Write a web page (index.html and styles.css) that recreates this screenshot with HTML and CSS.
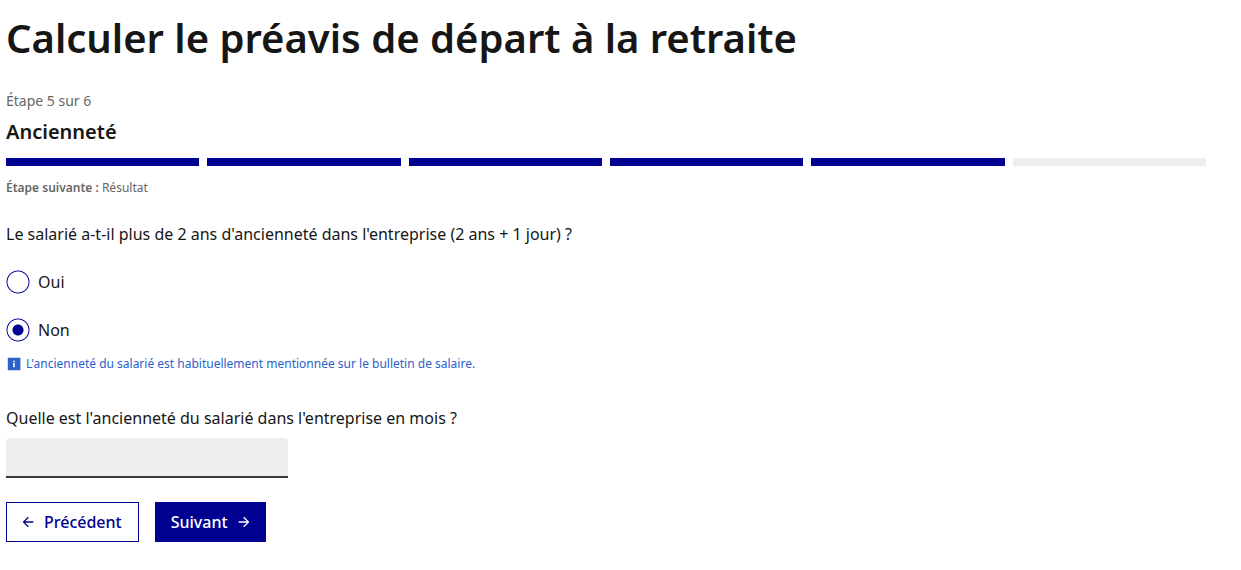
FILE: index.html
```html
<!DOCTYPE html>
<html lang="fr">
<head>
<meta charset="utf-8">
<meta name="viewport" content="width=device-width, initial-scale=1">
<title>Calculer le préavis de départ à la retraite</title>
<link rel="stylesheet" href="styles.css">
</head>
<body>
<main class="simulator">
  <h1 class="title">Calculer le préavis de départ à la retraite</h1>
  <section class="stepper">
    <h2 class="stepper-heading"><span class="stepper-state">Étape 5 sur 6</span><span class="stepper-title">Ancienneté</span></h2>
    <div class="steps" aria-hidden="true">
      <span class="step done"></span><span class="step done"></span><span class="step done"></span><span class="step done"></span><span class="step done"></span><span class="step"></span>
    </div>
    <p class="stepper-next"><strong>Étape suivante :</strong> Résultat</p>
  </section>
  <form class="form">
    <fieldset class="question">
      <legend class="label">Le salarié a-t-il plus de 2 ans d'ancienneté dans l'entreprise (2 ans + 1 jour) ?</legend>
      <div class="choice"><input class="radio" type="radio" name="seniority" id="yes"><label for="yes">Oui</label></div>
      <div class="choice"><input class="radio" type="radio" name="seniority" id="no" checked><label for="no">Non</label></div>
    </fieldset>
    <p class="info">
      <svg class="info-icon" viewBox="0 0 16 16" aria-hidden="true"><rect x="1.8" y="1.8" width="12.6" height="12.4" rx="0.7" fill="#2a62c9"/><path d="M7.2 4.8h1.6v1.5H7.2zM7.2 7.1h1.6v4.1H7.2z" fill="#fff"/></svg>
      <span>L'ancienneté du salarié est habituellement mentionnée sur le bulletin de salaire.</span>
    </p>
    <div class="field">
      <label class="label" for="months">Quelle est l'ancienneté du salarié dans l'entreprise en mois ?</label>
      <input class="input" id="months" type="text" inputmode="numeric">
    </div>
    <div class="actions">
      <button class="button secondary" type="button"><svg class="arrow" viewBox="0 0 24 24" aria-hidden="true"><path d="m7.8 11 5.4-5.4-1.4-1.4L4 12l7.8 7.8 1.4-1.4L7.8 13H20v-2z"/></svg>Précédent</button>
      <button class="button primary" type="submit">Suivant<svg class="arrow" viewBox="0 0 24 24" aria-hidden="true"><path d="m16.2 11-5.4-5.4 1.4-1.4L20 12l-7.8 7.8-1.4-1.4 5.4-5.4H4v-2z"/></svg></button>
    </div>
  </form>
</main>
</body>
</html>
```
FILE: styles.css
```css
* { box-sizing: border-box; }
body { margin: 0; background: #fff; color: #161616; font: 16px/24px "Noto Sans", sans-serif; }
.simulator { padding: 14px 35px 28px 6px; }
.title { margin: 0; font: 600 40px/48px "Noto Sans", sans-serif; }
.stepper { margin-top: 27px; }
.stepper-heading { margin: 0; }
.stepper-state, .stepper-title { display: block; }
.stepper-state { color: #666; font: 400 14px/24px "Noto Sans", sans-serif; }
.stepper-title { margin-top: 5px; font: 600 20px/28px "Noto Sans", sans-serif; }
.steps { display: grid; grid-template-columns: repeat(6, 1fr); gap: 8px; margin-top: 12px; }
.step { height: 8px; background: #eee; }
.step.done { background: #000091; }
.stepper-next { margin: 12px 0 0; color: #666; font-size: 12px; line-height: 20px; }
.stepper-next strong { font-weight: 600; }
.form { margin-top: 24px; }
.question { min-width: 0; margin: 0; padding: 0; border: 0; }
.label { display: block; padding: 0; }
.choice { display: flex; align-items: center; gap: 8px; height: 24px; margin-top: 24px; }
.radio { appearance: none; width: 24px; height: 24px; margin: 0; border-radius: 50%; background: radial-gradient(circle, transparent 10px, #000091 11px, transparent 12px); }
.radio:checked { background: radial-gradient(circle, #000091 5px, transparent 6px, transparent 10px, #000091 11px, transparent 12px); }
.info { display: flex; align-items: center; gap: 4px; margin: 12px 0 0; color: #2a62c9; font-size: 12px; line-height: 20px; }
.info-icon { width: 16px; height: 16px; }
.field { margin-top: 32px; }
.input { display: block; width: 282px; height: 40px; margin-top: 8px; padding: 8px 16px; border: 0; border-bottom: 2px solid #3a3a3a; border-radius: 4px 4px 0 0; background: #eee; font: inherit; }
.actions { display: flex; gap: 16px; margin-top: 24px; }
.button { display: flex; align-items: center; gap: 8px; height: 40px; border: 1px solid #000091; border-radius: 0; font: 500 16px/24px "Noto Sans", sans-serif; }
.primary { padding: 0 13px 0 15px; background: #000091; color: #fff; }
.secondary { padding: 0 16px 0 13px; background: #fff; color: #000091; }
.arrow { width: 16px; height: 16px; fill: currentColor; }
```
